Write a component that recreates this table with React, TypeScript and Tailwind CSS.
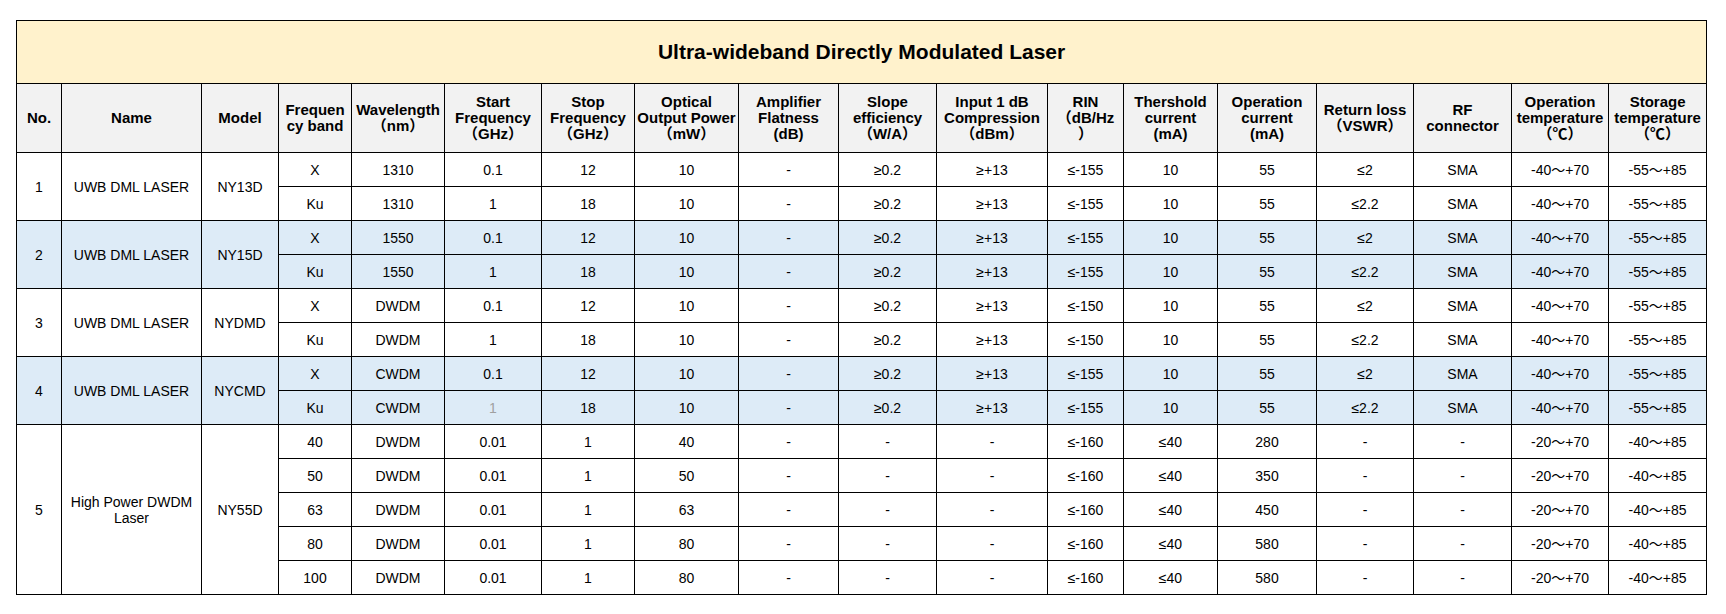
import React from 'react';

type Row = string[];

interface Group {
  no: string;
  name: React.ReactNode;
  model: string;
  blue?: boolean;
  rows: Row[];
}

const colWidths = [45, 140, 77, 73, 93, 97, 93, 104, 100, 98, 111, 76, 94, 99, 97, 98, 97, 98];

const headers: string[][] = [
  ['No.'],
  ['Name'],
  ['Model'],
  ['Frequen', 'cy band'],
  ['Wavelength', '（nm）'],
  ['Start', 'Frequency', '（GHz）'],
  ['Stop', 'Frequency', '（GHz）'],
  ['Optical', 'Output Power', '（mW）'],
  ['Amplifier', 'Flatness', '(dB)'],
  ['Slope', 'efficiency', '（W/A）'],
  ['Input 1 dB', 'Compression', '（dBm）'],
  ['RIN', '（dB/Hz', '）'],
  ['Thershold', 'current', '(mA)'],
  ['Operation', 'current', '(mA)'],
  ['Return loss', '（VSWR）'],
  ['RF', 'connector'],
  ['Operation', 'temperature', '（℃）'],
  ['Storage', 'temperature', '（℃）'],
];

const uwb = (wl: string, rin: string): Row[] => [
  ['X', wl, '0.1', '12', '10', '-', '≥0.2', '≥+13', rin, '10', '55', '≤2', 'SMA', '-40～+70', '-55～+85'],
  ['Ku', wl, '1', '18', '10', '-', '≥0.2', '≥+13', rin, '10', '55', '≤2.2', 'SMA', '-40～+70', '-55～+85'],
];

const hp = (band: string, power: string, op: string): Row =>
  [band, 'DWDM', '0.01', '1', power, '-', '-', '-', '≤-160', '≤40', op, '-', '-', '-20～+70', '-40～+85'];

const groups: Group[] = [
  { no: '1', name: 'UWB DML LASER', model: 'NY13D', rows: uwb('1310', '≤-155') },
  { no: '2', name: 'UWB DML LASER', model: 'NY15D', blue: true, rows: uwb('1550', '≤-155') },
  { no: '3', name: 'UWB DML LASER', model: 'NYDMD', rows: uwb('DWDM', '≤-150') },
  { no: '4', name: 'UWB DML LASER', model: 'NYCMD', blue: true, rows: uwb('CWDM', '≤-155') },
  {
    no: '5',
    name: (
      <>
        High Power DWDM
        <br />
        Laser
      </>
    ),
    model: 'NY55D',
    rows: [hp('40', '40', '280'), hp('50', '50', '350'), hp('63', '63', '450'), hp('80', '80', '580'), hp('100', '80', '580')],
  },
];

const cell = 'border border-black text-center align-middle p-0';

const App: React.FC = () => {
  return (
    <div
      className="min-h-[614px] w-[1726px] bg-white pt-[20px] pl-[16px] text-black"
      style={{ fontFamily: '"Liberation Sans", Arial, "Noto Sans CJK SC", sans-serif' }}
    >
      <table className="table-fixed border-collapse w-[1690px]">
        <colgroup>
          {colWidths.map((w, i) => (
            <col key={i} style={{ width: w }} />
          ))}
        </colgroup>
        <thead>
          <tr className="h-[63px] bg-[#fff2cc]">
            <th colSpan={18} className={`${cell} text-[21px] font-bold`}>
              Ultra-wideband Directly Modulated Laser
            </th>
          </tr>
          <tr className="h-[69px] bg-[#f2f2f2]">
            {headers.map((lines, i) => (
              <th key={i} className={`${cell} text-[15px] font-bold leading-[16px] whitespace-nowrap`}>
                {lines.map((l, j) => (
                  <div key={j}>{l}</div>
                ))}
              </th>
            ))}
          </tr>
        </thead>
        <tbody className="text-[14px] leading-[16px]">
          {groups.map((g) =>
            g.rows.map((r, ri) => (
              <tr key={`${g.no}-${ri}`} className={`h-[34px] ${g.blue ? 'bg-[#ddebf7]' : 'bg-white'}`}>
                {ri === 0 && (
                  <>
                    <td rowSpan={g.rows.length} className={cell}>{g.no}</td>
                    <td rowSpan={g.rows.length} className={cell}>{g.name}</td>
                    <td rowSpan={g.rows.length} className={cell}>{g.model}</td>
                  </>
                )}
                {r.map((v, ci) => (
                  <td
                    key={ci}
                    className={`${cell} whitespace-nowrap ${g.no === '4' && ri === 1 && ci === 2 ? 'text-[#a0a0a0]' : ''}`}
                  >
                    {v}
                  </td>
                ))}
              </tr>
            ))
          )}
        </tbody>
      </table>
    </div>
  );
};

export default App;
